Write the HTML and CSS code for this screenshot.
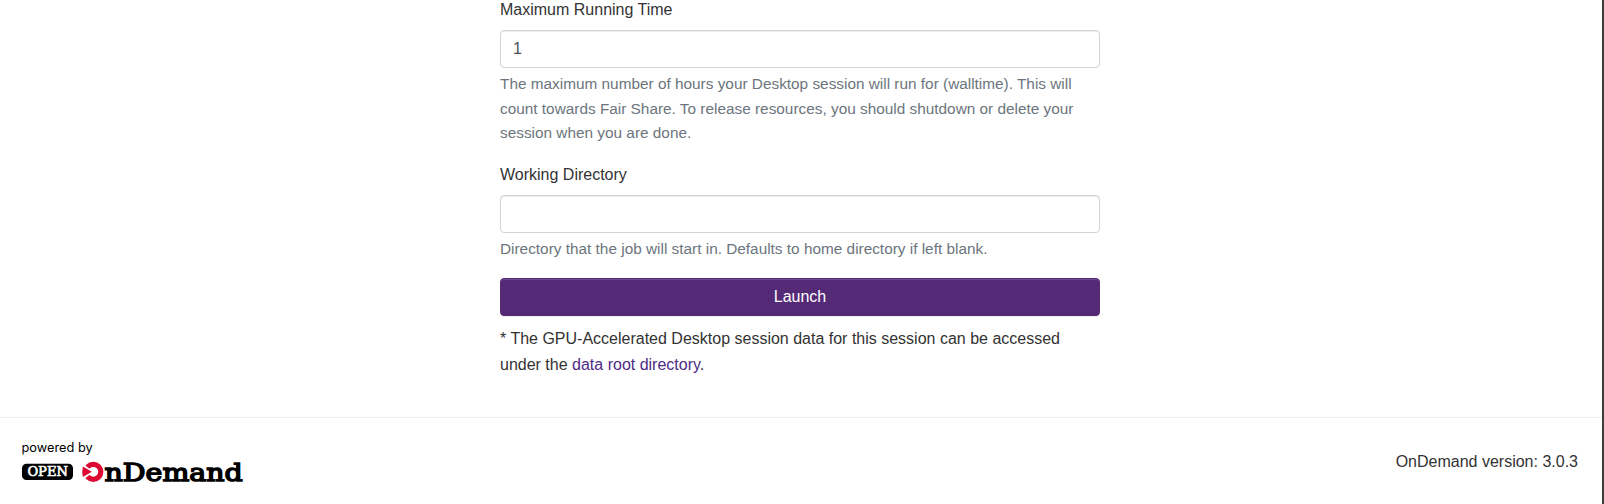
FILE: index.html
```html
<!DOCTYPE html>
<html lang="en">
<head>
<meta charset="utf-8">
<title>OnDemand</title>
<link rel="stylesheet" href="styles.css">
</head>
<body>
<div class="page">
  <main class="form">
    <div class="group">
      <label class="label" for="hours">Maximum Running Time</label>
      <input class="control" id="hours" type="text" value="1">
      <small class="help">The maximum number of hours your Desktop session will run for (walltime). This will count towards Fair Share. To release resources, you should shutdown or delete your session when you are done.</small>
    </div>
    <div class="group">
      <label class="label" for="dir">Working Directory</label>
      <input class="control" id="dir" type="text">
      <small class="help">Directory that the job will start in. Defaults to home directory if left blank.</small>
    </div>
    <button class="launch" type="button">Launch</button>
    <p class="note">* The GPU-Accelerated Desktop session data for this session can be accessed under the <a class="link" href="#">data root directory</a>.</p>
  </main>
  <footer class="footer">
    <svg class="logo" width="230" height="50" viewBox="0 0 230 50" role="img" aria-label="Powered by Open OnDemand">
      <text class="powered" x="-0.6" y="13.2" textLength="71.3" lengthAdjust="spacingAndGlyphs">powered by</text>
      <rect x="0" y="24.8" width="51" height="16.2" rx="4.5"/>
      <text class="open" x="5.4" y="37.2" textLength="40.5" lengthAdjust="spacingAndGlyphs">OPEN</text>
      <circle cx="71.3" cy="32.8" r="7.5" fill="none" stroke="#dc0a32" stroke-width="5.2"/>
      <path d="M57 22.2L72 32.8L57 43.4Z" fill="#fff"/>
      <path d="M60.9 27.6L69.8 32.8L60.9 38Q59.5 32.8 60.9 27.6Z" fill="#dc0a32"/>
      <text class="name" x="82.6" y="42" textLength="138" lengthAdjust="spacingAndGlyphs">nDemand</text>
    </svg>
    <span>OnDemand version: 3.0.3</span>
  </footer>
</div>
</body>
</html>
```
FILE: styles.css
```css
body {
  margin: 0;
  overflow: hidden;
  background: #fff;
  color: #333;
  font: 16px/1.6 "Liberation Sans", Arial, sans-serif;
}

.page {
  box-sizing: border-box;
  display: flex;
  flex-direction: column;
  height: 504px;
  border-right: 2px solid #3b3d3f;
}

.form {
  width: 600px;
  height: 420.4px;
  margin: -3.4px 0 0 500px;
  flex: none;
}

.group {
  margin-bottom: 16px;
}

.label {
  display: block;
  margin-bottom: 8px;
}

.control {
  box-sizing: border-box;
  display: block;
  width: 100%;
  height: 38px;
  padding: 6px 12px;
  border: 1px solid #ced4da;
  border-radius: 4px;
  background: #fff;
  box-shadow: inset 0 1px 1px rgba(0, 0, 0, 0.075);
  color: #495057;
  font: 16px/24px "Liberation Sans", Arial, sans-serif;
}

.help {
  display: block;
  margin-top: 4px;
  color: #6c757d;
  font-size: 15.36px;
}

.launch {
  display: block;
  width: 100%;
  height: 38px;
  border: 1px solid #542c79;
  border-radius: 4px;
  background: #542a76;
  box-shadow: inset 0 1px 0 rgba(255, 255, 255, 0.15), 0 1px 1px rgba(0, 0, 0, 0.075);
  color: #fff;
  font: 16px/24px "Liberation Sans", Arial, sans-serif;
}

.note {
  margin: 10.2px 0 0;
}

.link {
  color: #4e2a84;
  text-decoration: none;
}

.footer {
  display: flex;
  justify-content: space-between;
  flex: 1;
  padding: 21px 24px 0 22px;
  border-top: 1px solid #eee;
}

.footer span {
  padding-top: 10px;
}

.logo {
  overflow: visible;
}

.powered {
  font: 12.8px Inter, sans-serif;
}

.open {
  fill: #fff;
  stroke: #fff;
  stroke-width: 0.6;
  font: 12px "DejaVu Serif", serif;
}

.name {
  stroke: #000;
  stroke-width: 1.5;
  font: 25px "DejaVu Serif", serif;
}
```
